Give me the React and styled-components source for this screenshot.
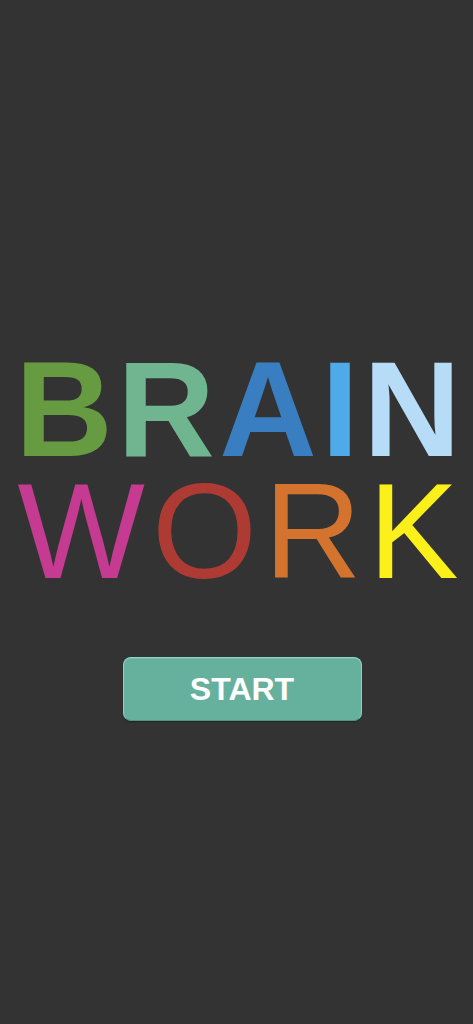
import React from "react";
import styled, { createGlobalStyle } from "styled-components";

const Global = createGlobalStyle`
  html, body {
    margin: 0;
    padding: 0;
    background: #333333;
  }
  body {
    font-family: "Liberation Sans", Arial, sans-serif;
  }
`;

const Screen = styled.main`
  height: 1024px;
  display: flex;
  flex-direction: column;
  align-items: center;
  padding-top: 349px;
  box-sizing: border-box;
`;

const Title = styled.h1`
  margin: 0;
  display: flex;
  flex-direction: column;
  align-items: center;
  font-size: 135px;
  line-height: 122px;
`;

const Word = styled.div`
  display: flex;
  font-weight: ${(p) => (p.$bold ? 700 : 400)};
  letter-spacing: ${(p) => p.$spacing}px;
  padding-left: ${(p) => p.$spacing + 3}px;
  white-space: nowrap;
`;

const Letter = styled.span`
  color: ${(p) => p.$color};
`;

const StartButton = styled.button`
  margin-top: 64px;
  margin-left: 11px;
  width: 239px;
  height: 64px;
  border-radius: 8px;
  border: 1px solid #8fd3c2;
  border-bottom-color: #4f9484;
  background: #66b09e;
  box-shadow: inset 0 1px 0 rgba(255, 255, 255, 0.15), 0 1px 1px rgba(0, 0, 0, 0.3);
  color: #ffffff;
  font-family: "Liberation Sans", Arial, sans-serif;
  font-weight: 700;
  font-size: 32px;
  cursor: pointer;
  padding: 0;
`;

const brain = [
  ["B", "#679b41"],
  ["R", "#6fb690"],
  ["A", "#3a7ec2"],
  ["I", "#4faae9"],
  ["N", "#b7dcf8"],
];

const work = [
  ["W", "#c43b91"],
  ["O", "#ae3b33"],
  ["R", "#d4732d"],
  ["K", "#fcf01b"],
];

export default function App() {
  return (
    <>
      <Global />
      <Screen>
        <Title>
          <Word $bold $spacing={4.5}>
            {brain.map(([ch, c], i) => (
              <Letter key={i} $color={c}>{ch}</Letter>
            ))}
          </Word>
          <Word $spacing={7}>
            {work.map(([ch, c], i) => (
              <Letter key={i} $color={c}>{ch}</Letter>
            ))}
          </Word>
        </Title>
        <StartButton>START</StartButton>
      </Screen>
    </>
  );
}
